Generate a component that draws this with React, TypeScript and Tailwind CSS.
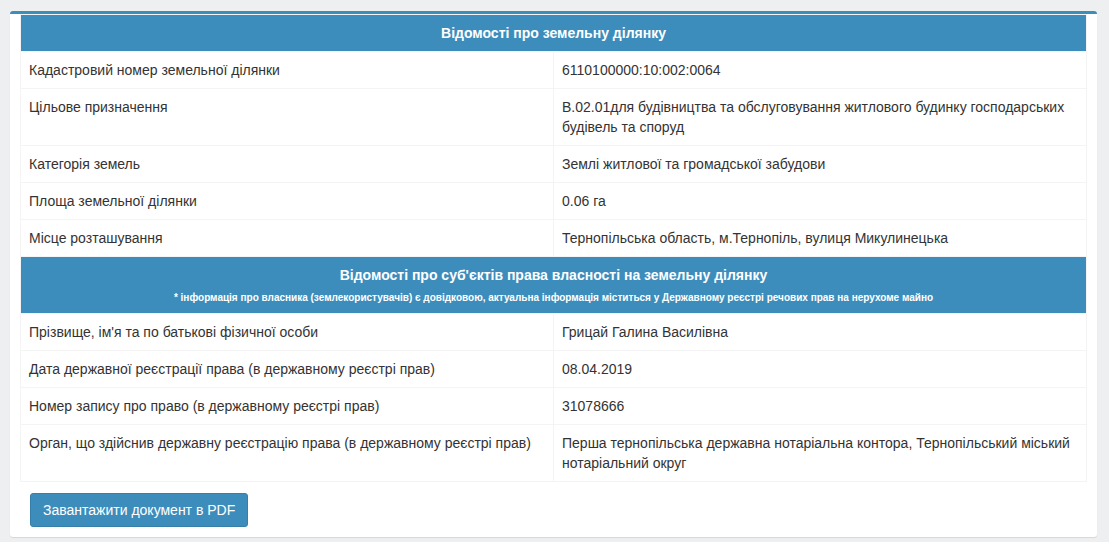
import React from "react";

const rows1: [string, React.ReactNode][] = [
  ["Кадастровий номер земельної ділянки", "6110100000:10:002:0064"],
  [
    "Цільове призначення",
    "В.02.01для будівництва та обслуговування житлового будинку господарських будівель та споруд",
  ],
  ["Категорія земель", "Землі житлової та громадської забудови"],
  ["Площа земельної ділянки", "0.06 га"],
  ["Місце розташування", "Тернопільська область, м.Тернопіль, вулиця Микулинецька"],
];

const rows2: [string, React.ReactNode][] = [
  ["Прізвище, ім'я та по батькові фізичної особи", "Грицай Галина Василівна"],
  ["Дата державної реєстрації права (в державному реєстрі прав)", "08.04.2019"],
  ["Номер запису про право (в державному реєстрі прав)", "31078666"],
  [
    "Орган, що здійснив державну реєстрацію права (в державному реєстрі прав)",
    "Перша тернопільська державна нотаріальна контора, Тернопільський міський нотаріальний округ",
  ],
];

function Row({ label, value }: { label: string; value: React.ReactNode }) {
  return (
    <tr>
      <td className="w-1/2 border border-[#f4f4f4] px-[8px] py-[8px] align-top leading-[20px]">{label}</td>
      <td className="w-1/2 border border-[#f4f4f4] px-[8px] py-[8px] align-top leading-[20px]">{value}</td>
    </tr>
  );
}

export default function App() {
  return (
    <div
      className="min-h-[542px] w-[1109px] bg-[#eeeff1] pt-[11px] pl-[10px] text-[14px] text-[#333]"
      style={{ fontFamily: '"Liberation Sans", Arial, sans-serif' }}
    >
      <div className="w-[1087px] rounded-[3px] border-t-[3px] border-[#3c8dbc] bg-white px-[10px] pb-[10px] shadow-[0_1px_1px_rgba(0,0,0,0.1)]">
        <table className="w-full table-fixed border-collapse border border-[#f4f4f4]">
          <tbody>
            <tr>
              <th
                colSpan={2}
                className="border border-[#f4f4f4] bg-[#3c8dbc] px-[8px] py-[8px] text-center font-bold leading-[20px] text-white"
              >
                Відомості про земельну ділянку
              </th>
            </tr>
            {rows1.map(([l, v]) => (
              <Row key={l} label={l} value={v} />
            ))}
            <tr>
              <th
                colSpan={2}
                className="border border-[#f4f4f4] bg-[#3c8dbc] px-[8px] pt-[8px] pb-[8px] text-center font-bold leading-[20px] text-white"
              >
                <div>Відомості про суб'єктів права власності на земельну ділянку</div>
                <div className="mt-[5px] text-[10px] leading-[15px]">
                  * інформація про власника (землекористувачів) є довідковою, актуальна інформація міститься у Державному реєстрі речових прав на нерухоме майно
                </div>
              </th>
            </tr>
            {rows2.map(([l, v]) => (
              <Row key={l} label={l} value={v} />
            ))}
          </tbody>
        </table>
        <div className="pt-[11px] pl-[10px]">
          <button className="h-[34px] rounded-[3px] border border-[#367fa9] bg-[#3c8dbc] px-[12px] text-[14px] leading-[20px] text-white">
            Завантажити документ в PDF
          </button>
        </div>
      </div>
    </div>
  );
}
